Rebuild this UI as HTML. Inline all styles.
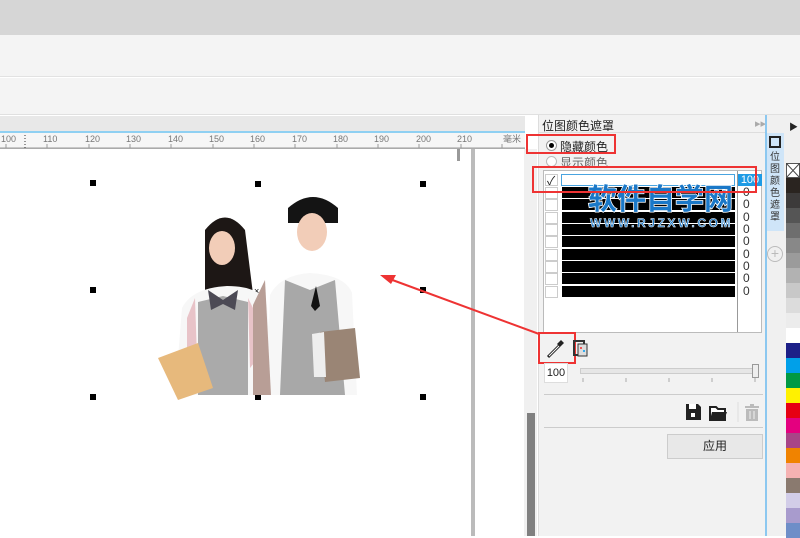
<!DOCTYPE html>
<html><head><meta charset="utf-8">
<style>
*{margin:0;padding:0;box-sizing:border-box}
body{width:800px;height:536px;overflow:hidden;position:relative;background:#fff;font-family:"Liberation Sans","Noto Sans CJK SC",sans-serif;font-size:11px;color:#222}
.a{position:absolute}
.sw{position:absolute;left:786px;width:14px;height:15px}
.row{position:absolute;left:545px;width:217px;height:11px}
.cb{position:absolute;left:0;top:0;width:13px;height:12px;border:1px solid #ccc;background:#fff}
.bar{position:absolute;left:17px;top:0;width:173px;height:11px;background:#000}
.num{position:absolute;left:198px;top:-2px;font-size:12px;color:#333}
</style></head><body>
<div class="a" style="left:0;top:0;width:800px;height:35px;background:#d6d6d6"></div>
<div class="a" style="left:0;top:35px;width:800px;height:42px;background:#f4f4f4;border-bottom:1px solid #e2e2e2"></div>
<div class="a" style="left:0;top:78px;width:800px;height:37px;background:#f4f4f4;border-bottom:1px solid #e0e0e0"></div>
<div class="a" style="left:0;top:116px;width:525px;height:16px;background:#e8e8e8"></div>
<div class="a" style="left:0;top:131px;width:525px;height:2px;background:#8fd0f2"></div>
<div class="a" style="left:0;top:133px;width:525px;height:16px;background:#f6f6f6;border-bottom:1px solid #bbb"></div>
<svg class="a" style="left:0;top:133px" width="525" height="16">
<g font-family="Liberation Sans" font-size="9" fill="#777">
<text x="1" y="9">100</text><text x="43" y="9">110</text><text x="85" y="9">120</text><text x="126" y="9">130</text><text x="168" y="9">140</text><text x="209" y="9">150</text><text x="250" y="9">160</text><text x="292" y="9">170</text><text x="333" y="9">180</text><text x="374" y="9">190</text><text x="416" y="9">200</text><text x="457" y="9">210</text><text x="503" y="9">毫米</text></g>
<path d="M0 15H525" stroke="#999"/>
<g stroke="#999">
<path d="M6 11v4M47 11v4M89 11v4M130 11v4M171 11v4M213 11v4M254 11v4M295 11v4M337 11v4M378 11v4M419 11v4M461 11v4M502 11v4"/>
</g>
<path d="M25 2v13" stroke="#333" stroke-dasharray="1 2"/>
</svg>
<div class="a" style="left:457px;top:149px;width:3px;height:12px;background:#999"></div>
<div class="a" style="left:471px;top:149px;width:4px;height:387px;background:#bbb"></div>
<div class="a" style="left:524px;top:149px;width:13px;height:387px;background:#f0f0f0"></div>
<div class="a" style="left:527px;top:413px;width:8px;height:123px;background:#808080"></div>
<!-- photo -->
<svg class="a" style="left:90px;top:180px" width="340" height="220">
<g fill="#000"><rect x="0" y="0" width="6" height="6"/><rect x="165" y="1" width="6" height="6"/><rect x="330" y="1" width="6" height="6"/><rect x="0" y="107" width="6" height="6"/><rect x="330" y="107" width="6" height="6"/><rect x="0" y="214" width="6" height="6"/><rect x="165" y="215" width="6" height="6"/><rect x="330" y="214" width="6" height="6"/></g>
<text x="164" y="114" font-size="9">×</text>
<!-- girl -->
<path d="M115 50q20-25 40 0l10 80h-50z" fill="#1d1715"/>
<ellipse cx="132" cy="68" rx="13" ry="17" fill="#f2cdb8"/>
<path d="M92 128q10-20 45-22q35 0 40 20l8 89h-100z" fill="#f7f7f7"/>
<path d="M105 118l-8 20v30l10 10" fill="#e8c3c8"/>
<path d="M158 118l10 20v40l-8 10" fill="#e8c3c8"/>
<path d="M108 122l25-6 25 6v93h-50z" fill="#aaa"/>
<path d="M118 110l15 10 15-10-3 20-12-6-12 6z" fill="#4c4a55"/>
<path d="M68 178l40-15 15 45-35 12z" fill="#e7b97c"/>
<!-- boy -->
<path d="M198 28q25-22 50 0v15h-50z" fill="#141414"/>
<ellipse cx="222" cy="52" rx="15" ry="19" fill="#f2cdb8"/>
<path d="M180 115q10-20 40-22q35 2 42 20l5 102h-90z" fill="#f7f7f7"/>
<path d="M175 100l-12 25v90h18z" fill="#b89e96"/>
<path d="M195 100l25 10 25-10 10 115h-65z" fill="#a8a8a8"/>
<path d="M226 106l4 20-5 5-4-5z" fill="#111"/>
<path d="M230 152l35-4 5 50-35 4z" fill="#9a8575"/>
<path d="M222 154l12-2 2 45h-12z" fill="#eee"/>
</svg>
<!-- red arrow -->
<svg class="a" style="left:375px;top:270px" width="180" height="70">
<path d="M12 8L175 68" stroke="#e33" stroke-width="2"/>
<path d="M5 5l16 0-5 9z" fill="#e33"/>
</svg>
<!-- panel -->
<div class="a" style="left:538px;top:115px;width:227px;height:421px;background:#f2f2f2;border-left:1px solid #ddd"></div>
<div class="a" style="left:542px;top:117px;font-size:12px">位图颜色遮罩</div>
<div class="a" style="left:755px;top:117px;font-size:11px;color:#aaa">▸▸</div>
<div class="a" style="left:769px;top:114px;font-size:14px;color:#999">✕</div>
<div class="a" style="left:538px;top:132px;width:227px;height:1px;background:#ddd"></div>
<div class="a" style="left:546px;top:140px;width:11px;height:11px;border-radius:50%;border:1px solid #999;background:#fff"></div>
<div class="a" style="left:549px;top:143px;width:5px;height:5px;border-radius:50%;background:#000"></div>
<div class="a" style="left:560px;top:138px;font-size:12px">隐藏颜色</div>
<div class="a" style="left:546px;top:156px;width:11px;height:11px;border-radius:50%;border:1px solid #bbb;background:#fff"></div>
<div class="a" style="left:560px;top:154px;font-size:12px;color:#666">显示颜色</div>
<div class="a" style="left:543px;top:170px;width:219px;height:163px;background:#fff;border:1px solid #bbb"></div>
<div class="a" style="left:737px;top:171px;width:1px;height:161px;background:#999"></div>
<div class="row" style="top:174px"><div class="cb"></div><div class="a" style="left:2px;top:-2px;font-size:12px">✓</div><div class="a" style="left:16px;top:0;width:174px;height:12px;border:1px solid #49a4e0;background:#fff"></div><div class="a" style="left:193px;top:0;width:24px;height:12px;background:#1e9be5;color:#fff;font-size:11px;text-align:center;line-height:12px">100</div></div>
<div class="row" style="top:187px"><div class="cb"></div><div class="bar"></div><div class="num">0</div></div>
<div class="row" style="top:199px"><div class="cb"></div><div class="bar"></div><div class="num">0</div></div>
<div class="row" style="top:212px"><div class="cb"></div><div class="bar"></div><div class="num">0</div></div>
<div class="row" style="top:224px"><div class="cb"></div><div class="bar"></div><div class="num">0</div></div>
<div class="row" style="top:236px"><div class="cb"></div><div class="bar"></div><div class="num">0</div></div>
<div class="row" style="top:249px"><div class="cb"></div><div class="bar"></div><div class="num">0</div></div>
<div class="row" style="top:261px"><div class="cb"></div><div class="bar"></div><div class="num">0</div></div>
<div class="row" style="top:273px"><div class="cb"></div><div class="bar"></div><div class="num">0</div></div>
<div class="row" style="top:286px"><div class="cb"></div><div class="bar"></div><div class="num">0</div></div>
<!-- watermark -->
<div class="a" style="left:588px;top:183px;font-size:29px;font-weight:bold;color:#1a78c8;line-height:34px;-webkit-text-stroke:1.5px #fff;paint-order:stroke fill">软件自学网</div>
<div class="a" style="left:590px;top:216px;font-size:12px;font-weight:bold;color:#1a78c8;letter-spacing:2.6px;-webkit-text-stroke:0.5px #fff">WWW.RJZXW.COM</div>
<!-- red boxes -->
<div class="a" style="left:526px;top:134px;width:90px;height:20px;border:2px solid #e33"></div>
<div class="a" style="left:532px;top:166px;width:225px;height:27px;border:2px solid #e33"></div>
<div class="a" style="left:538px;top:332px;width:38px;height:32px;border:2px solid #e33"></div>
<!-- tools -->
<svg class="a" style="left:545px;top:338px" width="45" height="22">
<path d="M3 19l11-11" stroke="#222" stroke-width="3"/><path d="M4 18l10-10" stroke="#fff" stroke-width="1"/>
<path d="M12 6l4-4 3 3-4 4z" fill="#222"/>
<rect x="29" y="3" width="10" height="14" fill="none" stroke="#333" stroke-width="2"/>
<rect x="33" y="6" width="9" height="12" fill="#ddd" stroke="#333"/>
<rect x="35" y="9" width="2" height="2" fill="#e55"/><rect x="38" y="12" width="2" height="2" fill="#3ae"/>
</svg>
<div class="a" style="left:544px;top:363px;width:24px;height:20px;background:#fff;border:1px solid #ddd;font-size:11px;text-align:center;line-height:18px">100</div>
<div class="a" style="left:580px;top:368px;width:178px;height:6px;background:#e6e6e6;border:1px solid #ccc"></div>
<div class="a" style="left:752px;top:364px;width:7px;height:14px;background:#eee;border:1px solid #999"></div>
<svg class="a" style="left:580px;top:378px" width="180" height="6"><path d="M3 0v4M46 0v4M89 0v4M132 0v4M175 0v4" stroke="#aaa"/></svg>
<div class="a" style="left:544px;top:394px;width:219px;height:1px;background:#ccc"></div>
<svg class="a" style="left:684px;top:402px" width="80" height="20">
<path d="M2 2h12l3 3v13H2z" fill="#222"/><rect x="5" y="2" width="7" height="5" fill="#fff"/><rect x="7" y="11" width="4" height="4" fill="#fff"/>
<path d="M26 5h6l2 2h7v11H26z" fill="#fff" stroke="#222" stroke-width="2"/><path d="M28 10h15l-3 8H26z" fill="#222"/>
<path d="M54 0v20" stroke="#ddd"/>
<path d="M61 5h14M66 3h4" stroke="#bbb" stroke-width="2"/><path d="M62 7h12v12H62z" fill="#bbb"/><path d="M66 9v8M70 9v8" stroke="#f2f2f2"/>
</svg>
<div class="a" style="left:544px;top:427px;width:219px;height:1px;background:#ccc"></div>
<div class="a" style="left:667px;top:434px;width:96px;height:25px;background:#e8e8e8;border:1px solid #ccc;text-align:center;line-height:23px;font-size:12px">应用</div>
<!-- vertical tab -->
<div class="a" style="left:765px;top:115px;width:21px;height:421px;background:#f0f0f0;border-left:2px solid #8cc8f0"></div>
<div class="a" style="left:767px;top:133px;width:17px;height:98px;background:#cfe5f8"></div>
<div class="a" style="left:769px;top:136px;width:12px;height:12px;border:2px solid #222"></div>
<div class="a" style="left:770px;top:152px;width:12px;font-size:10px;line-height:12px;color:#333">位图颜色遮罩</div>
<div class="a" style="left:767px;top:246px;width:16px;height:16px;border-radius:50%;border:1px solid #bbb;color:#bbb;font-size:14px;line-height:13px;text-align:center">+</div>
<!-- palette -->
<div class="a" style="left:786px;top:115px;width:14px;height:48px;background:#f0f0f0"></div>
<div class="a" style="left:789px;top:120px;font-size:9px">▶</div>
<div class="a" style="left:786px;top:163px;width:14px;height:15px;background:#fff;border:1px solid #555"></div>
<svg class="a" style="left:786px;top:163px" width="14" height="15"><path d="M0 0L14 15M14 0L0 15" stroke="#444"/></svg>
<div class="sw" style="top:178px;background:#2a2420"></div>
<div class="sw" style="top:193px;background:#3c3a3a"></div>
<div class="sw" style="top:208px;background:#555"></div>
<div class="sw" style="top:223px;background:#6e6e6e"></div>
<div class="sw" style="top:238px;background:#888"></div>
<div class="sw" style="top:253px;background:#9b9b9b"></div>
<div class="sw" style="top:268px;background:#b2b2b2"></div>
<div class="sw" style="top:283px;background:#c8c8c8"></div>
<div class="sw" style="top:298px;background:#dcdcdc"></div>
<div class="sw" style="top:313px;background:#ececec"></div>
<div class="sw" style="top:328px;background:#fff"></div>
<div class="sw" style="top:343px;background:#1d2088"></div>
<div class="sw" style="top:358px;background:#00a0e9"></div>
<div class="sw" style="top:373px;background:#009944"></div>
<div class="sw" style="top:388px;background:#fff100"></div>
<div class="sw" style="top:403px;background:#e60012"></div>
<div class="sw" style="top:418px;background:#e4007f"></div>
<div class="sw" style="top:433px;background:#a84587"></div>
<div class="sw" style="top:448px;background:#f08300"></div>
<div class="sw" style="top:463px;background:#f5b2b2"></div>
<div class="sw" style="top:478px;background:#8a7a6f"></div>
<div class="sw" style="top:493px;background:#d2cde8"></div>
<div class="sw" style="top:508px;background:#a89bcd"></div>
<div class="sw" style="top:523px;background:#6e8ec8"></div>
</body></html>
